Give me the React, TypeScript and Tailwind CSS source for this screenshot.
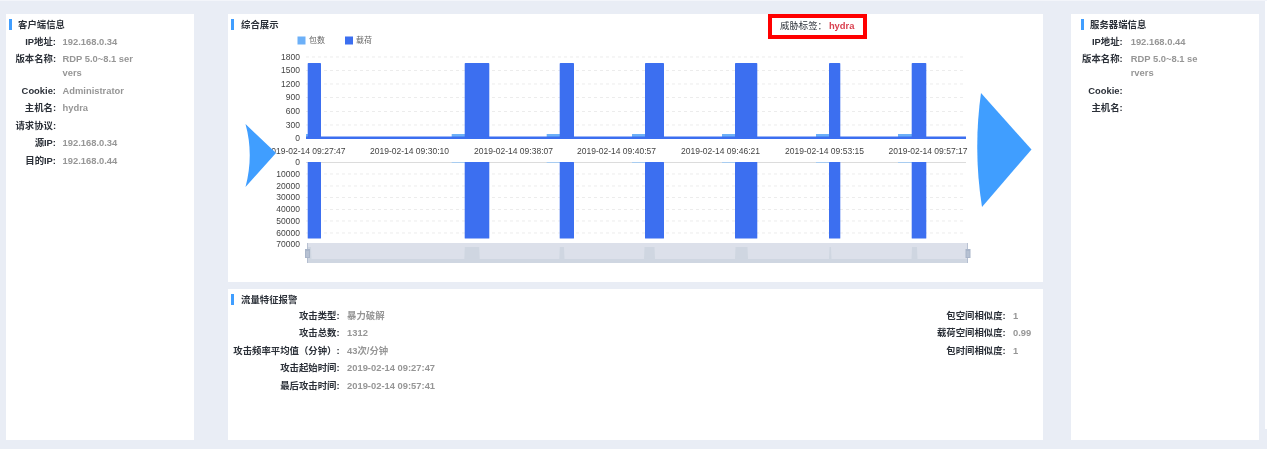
const infoFont = "[font-family:'Liberation_Sans','Noto_Sans_CJK_SC',sans-serif]";

interface RowData {
  label: string;
  value?: string;
}

const clientRows: RowData[] = [
  { label: "IP地址:", value: "192.168.0.34" },
  { label: "版本名称:", value: "RDP 5.0~8.1 servers" },
  { label: "Cookie:", value: "Administrator" },
  { label: "主机名:", value: "hydra" },
  { label: "请求协议:" },
  { label: "源IP:", value: "192.168.0.34" },
  { label: "目的IP:", value: "192.168.0.44" },
];

const serverRows: RowData[] = [
  { label: "IP地址:", value: "192.168.0.44" },
  { label: "版本名称:", value: "RDP 5.0~8.1 servers" },
  { label: "Cookie:" },
  { label: "主机名:" },
];

const attackRows: RowData[] = [
  { label: "攻击类型:", value: "暴力破解" },
  { label: "攻击总数:", value: "1312" },
  { label: "攻击频率平均值（分钟）:", value: "43次/分钟" },
  { label: "攻击起始时间:", value: "2019-02-14 09:27:47" },
  { label: "最后攻击时间:", value: "2019-02-14 09:57:41" },
];

const similarityRows: RowData[] = [
  { label: "包空间相似度:", value: "1" },
  { label: "载荷空间相似度:", value: "0.99" },
  { label: "包时间相似度:", value: "1" },
];

function InfoRow({ label, value, labelClass, valueClass }: RowData & { labelClass: string; valueClass: string }) {
  return (
    <div className="flex py-[1.75px] text-[9.4px] leading-[14px] font-bold">
      <div className={`shrink-0 text-right whitespace-nowrap text-[#2b3038] ${labelClass}`}>{label}</div>
      <div className={`text-[#969696] ${valueClass}`}>{value}</div>
    </div>
  );
}

function PanelTitle({ title, barClass }: { title: string; barClass: string }) {
  return (
    <div className={`flex h-[16px] shrink-0 items-end ${barClass}`}>
      <span className="h-[11px] w-[3px] bg-[#409eff]" />
      <span className="text-[9.4px] leading-[11px] font-bold text-[#2b3038]">{title}</span>
    </div>
  );
}

// bars share x ranges between the upper and lower grids
const bars = [
  [307.7, 321],
  [464.7, 489.3],
  [559.7, 574],
  [645, 664],
  [735, 757.3],
  [829, 840.3],
  [911.7, 926.3],
];
const smallBars = [
  [306, 308],
  [451.7, 465],
  [546.7, 560],
  [632, 645],
  [722, 735],
  [816, 829],
  [898, 912],
];
const upperTicks: [string, number][] = [
  ["1800", 56.5],
  ["1500", 70],
  ["1200", 83.5],
  ["900", 97],
  ["600", 111],
  ["300", 124.5],
  ["0", 138],
];
const lowerTicks: [string, number][] = [
  ["0", 162],
  ["10000", 173.5],
  ["20000", 185.5],
  ["30000", 197],
  ["40000", 209],
  ["50000", 220.5],
  ["60000", 232.5],
  ["70000", 244],
];
const timeLabels: [string, number][] = [
  ["2019-02-14 09:27:47", 306],
  ["2019-02-14 09:30:10", 409.5],
  ["2019-02-14 09:38:07", 513.5],
  ["2019-02-14 09:40:57", 616.5],
  ["2019-02-14 09:46:21", 720.5],
  ["2019-02-14 09:53:15", 824.5],
  ["2019-02-14 09:57:17", 928],
];
const spikes = [
  [307.5, 311.5],
  [464.3, 479.7],
  [559.3, 564.5],
  [644, 655],
  [735, 748],
  [829, 831.5],
  [911.5, 917.5],
];

function TrafficChart() {
  return (
    <svg viewBox="228 33 815 249" className="block h-[249px] w-[815px] shrink-0">
      <rect x={297.5} y={36.5} width={8} height={8} fill="#6cb0f8" />
      <text x={309} y={43} fontSize={8} fill="#666">包数</text>
      <rect x={345} y={36.5} width={8} height={8} fill="#3c6ff0" />
      <text x={356} y={43} fontSize={8} fill="#666">载荷</text>

      {upperTicks.slice(0, -1).map(([, y]) => (
        <line key={y} x1={306} x2={966} y1={y + 0.5} y2={y + 0.5} stroke="#e4e4e4" strokeWidth={0.7} strokeDasharray="3 3" />
      ))}
      {lowerTicks.slice(1, -1).map(([, y]) => (
        <line key={y} x1={306} x2={966} y1={y + 0.5} y2={y + 0.5} stroke="#e4e4e4" strokeWidth={0.7} strokeDasharray="3 3" />
      ))}

      {upperTicks.map(([t, y]) => (
        <text key={t} x={300} y={y + 3} fontSize={8.5} textAnchor="end" fill="#444">{t}</text>
      ))}
      {lowerTicks.map(([t, y]) => (
        <text key={t} x={300} y={y + 3} fontSize={8.5} textAnchor="end" fill="#444">{t}</text>
      ))}
      {timeLabels.map(([t, x]) => (
        <text key={t} x={x} y={154} fontSize={8.5} textAnchor="middle" fill="#444">{t}</text>
      ))}

      {smallBars.map(([a, b]) => (
        <rect key={a} x={a} y={134} width={b - a} height={4} fill="#6cb0f8" />
      ))}
      {bars.map(([a, b]) => (
        <rect key={a} x={a} y={63} width={b - a} height={75} rx={0.8} fill="#3c6ff0" />
      ))}
      <rect x={306} y={136.5} width={660} height={2.5} fill="#3c6ff0" />

      <line x1={306} x2={966} y1={162.5} y2={162.5} stroke="#dcdcdc" />
      {smallBars.slice(1).map(([a, b]) => (
        <rect key={a} x={a} y={162} width={b - a} height={0.8} fill="#9cc8f6" />
      ))}
      {bars.map(([a, b]) => (
        <rect key={a} x={a} y={162} width={b - a} height={76.5} rx={0.5} fill="#3c6ff0" />
      ))}

      <rect x={307.5} y={243} width={660} height={20} fill="#dce0ea" />
      <rect x={307.5} y={259} width={660} height={4} fill="#cfd6e1" />
      {spikes.map(([a, b]) => (
        <polygon key={a} points={`${a},259 ${a + 0.5},247 ${b - 0.5},247 ${b},259`} fill="#cfd6e1" />
      ))}
      <line x1={307.5} x2={307.5} y1={243} y2={263} stroke="#a9b5c9" strokeWidth={0.8} />
      <line x1={967.5} x2={967.5} y1={243} y2={263} stroke="#a9b5c9" strokeWidth={0.8} />
      <rect x={305} y={249} width={5} height={9} fill="#a9b5c9" />
      <rect x={965.5} y={249} width={5} height={9} fill="#a9b5c9" />
      <path d="M306 252h3M306 254h3M306 256h3M966.5 252h3M966.5 254h3M966.5 256h3" stroke="#d8deea" strokeWidth={0.6} />

      <path d="M245.5 124 L276 153 L245.5 187 Q254 155 245.5 124Z" fill="#409eff" />
      <path d="M981 93 L1031.5 149.5 L982 207 Q973 150 981 93Z" fill="#409eff" />
    </svg>
  );
}

export default function App() {
  return (
    <div className={`flex h-[449px] w-[1267px] overflow-hidden border-t border-t-[#f3f5fa] bg-[#e9edf5] pt-[13px] pb-[9px] pl-[6px] blur-[0.35px] ${infoFont}`}>
      <aside className="flex w-[188px] shrink-0 flex-col bg-white">
        <PanelTitle title="客户端信息" barClass="gap-[6px] pl-[3px]" />
        <div className="mt-[3px]">
          {clientRows.map((r) => (
            <InfoRow key={r.label} {...r} labelClass="w-[50px]" valueClass="ml-[6.5px] w-[73px] break-all" />
          ))}
        </div>
      </aside>

      <main className="ml-[34px] flex w-[815px] shrink-0 flex-col">
        <section className="flex h-[268px] shrink-0 flex-col bg-white">
          <div className="flex h-[19px] shrink-0 items-start justify-between pr-[176px]">
            <PanelTitle title="综合展示" barClass="gap-[7px] pl-[3px]" />
            <div className="flex h-[25px] w-[99px] shrink-0 items-center border-4 border-[#ff0000] pl-[8px] text-[9.4px]">
              <span className="whitespace-nowrap text-[#2b3038]">威胁标签：</span>
              <span className="ml-[2px] font-bold text-[#d9404f]">hydra</span>
            </div>
          </div>
          <TrafficChart />
        </section>

        <section className="mt-[7px] flex flex-1 flex-col bg-white">
          <PanelTitle title="流量特征报警" barClass="gap-[7px] pl-[3px]" />
          <div className="mt-[2px] flex justify-between">
            <div>
              {attackRows.map((r) => (
                <InfoRow key={r.label} {...r} labelClass="flex w-[111.5px] justify-end" valueClass="ml-[7.5px]" />
              ))}
            </div>
            <div>
              {similarityRows.map((r) => (
                <InfoRow key={r.label} {...r} labelClass="w-[90.5px]" valueClass="ml-[7.3px] w-[30px]" />
              ))}
            </div>
          </div>
        </section>
      </main>

      <aside className="ml-[28px] flex w-[188px] shrink-0 flex-col bg-white">
        <PanelTitle title="服务器端信息" barClass="gap-[6px] pl-[10px]" />
        <div className="mt-[3px]">
          {serverRows.map((r) => (
            <InfoRow key={r.label} {...r} labelClass="w-[51.7px]" valueClass="ml-[8px] w-[69px] break-all" />
          ))}
        </div>
      </aside>

      <div className="-mt-[14px] ml-[6px] h-[429px] w-[2px] shrink-0 bg-white" />
    </div>
  );
}
